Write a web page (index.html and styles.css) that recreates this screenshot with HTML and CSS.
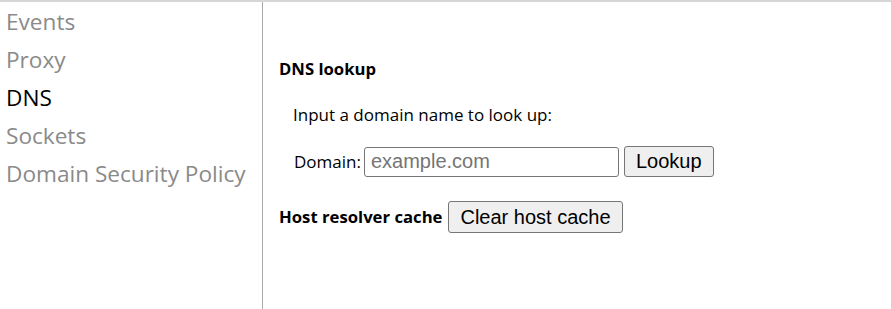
FILE: index.html
```html
<!DOCTYPE html>
<html lang="en">
<head>
  <meta charset="UTF-8" />
  <title>net-internals</title>
  <link rel="stylesheet" href="styles.css">
</head>
<body>
  <div class="app">
    <nav class="tabs">
      <a href="#events">Events</a>
      <a href="#proxy">Proxy</a>
      <a href="#dns" class="selected">DNS</a>
      <a href="#sockets">Sockets</a>
      <a href="#hsts">Domain Security Policy</a>
    </nav>

    <main class="content">
      <h2>DNS lookup</h2>
      <p class="hint">Input a domain name to look up:</p>
      <form class="lookup-row" onsubmit="return false">
        <label for="dnsInput">Domain:</label>
        <input id="dnsInput" type="text" placeholder="example.com">
        <button type="submit">Lookup</button>
      </form>
      <div class="cache-row">
        <h2>Host resolver cache</h2>
        <button type="button">Clear host cache</button>
      </div>
    </main>
  </div>
</body>
</html>
```

FILE: styles.css
```css
body {
  margin: 0;
  font-family: 'Open Sans', sans-serif;
  border-top: 2px solid #d6d6d6;
  background: #fff;
  color: #000;
}
.app {
  display: flex;
  height: calc(100vh - 2px);
}
.tabs {
  width: 263px;
  box-sizing: border-box;
  border-right: 1px solid #a8a8a8;
  display: flex;
  flex-direction: column;
  padding-left: 6px;
}
.tabs a {
  font-size: 22.6px;
  line-height: 38px;
  color: #8a8a8a;
  text-decoration: none;
  white-space: nowrap;
}
.tabs a:first-child {
  margin-top: 1px;
}
.tabs a.selected {
  color: #000;
}
.content {
  flex: 1;
  padding: 0 16px;
}
.content h2 {
  font-size: 16.7px;
  font-weight: bold;
  line-height: 22px;
  margin: 0;
}
.content > h2 {
  margin-top: 56px;
}
.hint {
  font-size: 17px;
  line-height: 22px;
  margin: 24px 0 0;
  padding-left: 14px;
}
.lookup-row {
  display: flex;
  align-items: center;
  margin: 20px 0 0;
  padding-left: 15px;
  font-size: 17px;
}
.lookup-row input {
  width: 255px;
  height: 30px;
  box-sizing: border-box;
  margin-left: 3px;
  padding: 0 6px;
  border: 1px solid #767676;
  border-radius: 3px;
  font-family: 'Liberation Sans', Arial, sans-serif;
  font-size: 20px;
}
.lookup-row input::placeholder {
  color: #757575;
}
button {
  height: 31px;
  box-sizing: border-box;
  padding: 0 11px;
  margin-left: 5px;
  background: #efefef;
  border: 1px solid #767676;
  border-radius: 3px;
  font-family: 'Liberation Sans', Arial, sans-serif;
  font-size: 20px;
  color: #000;
}
.cache-row {
  display: flex;
  align-items: center;
  margin-top: 24px;
}
.cache-row button {
  height: 32px;
  margin-left: 6px;
}
```
